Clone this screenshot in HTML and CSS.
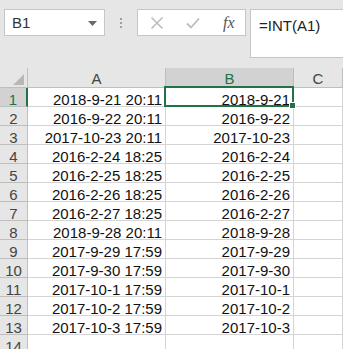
FILE: index.html
```html
<!DOCTYPE html>
<html>
<head>
    <title>INT</title>
    <link rel="stylesheet" href="styles.css">
</head>
<body>
    <div class="toolbar">
        <div class="name-box">
            <span>B1</span>
            <svg class="drop" width="9" height="5" viewBox="0 0 9 5"><path d="M0 0 H9 L4.5 5 Z" fill="#6a6a6a"/></svg>
        </div>
        <div class="grip"><i></i><i></i><i></i></div>
        <div class="buttons">
            <svg width="14" height="14" viewBox="0 0 14 14"><path d="M1.5 1.5 L12.5 12.5 M12.5 1.5 L1.5 12.5" stroke="#bdbdbd" stroke-width="1.6" fill="none"/></svg>
            <svg class="ok" width="14" height="12" viewBox="0 0 14 12"><path d="M1 6.5 L5 10.5 L13 1.5" stroke="#bdbdbd" stroke-width="1.8" fill="none"/></svg>
            <span class="fx">fx</span>
        </div>
        <div class="formula">=INT(A1)</div>
    </div>

    <div class="sheet" id="sheet">
        <div class="hd corner"><svg width="11" height="11" viewBox="0 0 11 11"><path d="M11 0 V11 H0 Z" fill="#b7b7b7"/></svg></div>
        <div class="hd col">A</div>
        <div class="hd col sel">B</div>
        <div class="hd col">C</div>
        <div class="selection"><div class="handle"></div></div>
    </div>

    <script>
        const data = [
            ['2018-9-21 20:11', '2018-9-21'],
            ['2016-9-22 20:11', '2016-9-22'],
            ['2017-10-23 20:11', '2017-10-23'],
            ['2016-2-24 18:25', '2016-2-24'],
            ['2016-2-25 18:25', '2016-2-25'],
            ['2016-2-26 18:25', '2016-2-26'],
            ['2016-2-27 18:25', '2016-2-27'],
            ['2018-9-28 20:11', '2018-9-28'],
            ['2017-9-29 17:59', '2017-9-29'],
            ['2017-9-30 17:59', '2017-9-30'],
            ['2017-10-1 17:59', '2017-10-1'],
            ['2017-10-2 17:59', '2017-10-2'],
            ['2017-10-3 17:59', '2017-10-3'],
            ['', '']
        ];
        const sheet = document.getElementById('sheet');
        data.forEach(function(row, i) {
            const num = document.createElement('div');
            num.className = 'hd row' + (i === 0 ? ' sel' : '');
            num.textContent = i + 1;
            sheet.appendChild(num);
            [row[0], row[1], ''].forEach(function(v) {
                const c = document.createElement('div');
                c.className = 'cell';
                c.textContent = v;
                sheet.appendChild(c);
            });
        });
    </script>
</body>
</html>
```

FILE: styles.css
```css
body {
    margin: 0;
    background: #fff;
    font-family: "Liberation Sans", Arial, sans-serif;
    font-size: 15px;
    color: #000;
}
.toolbar {
    background: #e6e6e6;
    height: 68px;
    display: flex;
    align-items: flex-start;
    padding: 9px 0 0 4px;
    box-sizing: border-box;
}
.name-box {
    width: 101px;
    height: 27px;
    box-sizing: border-box;
    background: #fff;
    border: 1px solid #c6c6c6;
    display: flex;
    align-items: center;
    justify-content: space-between;
    padding: 0 7px 0 7px;
    color: #333;
}
.drop {
    margin-top: 1px;
}
.grip {
    width: 32px;
    height: 27px;
    display: flex;
    flex-direction: column;
    align-items: center;
    justify-content: center;
    gap: 2px;
}
.grip i {
    width: 2px;
    height: 2px;
    background: #a0a0a0;
}
.buttons {
    width: 109px;
    height: 27px;
    box-sizing: border-box;
    background: #fff;
    border: 1px solid #c6c6c6;
    display: flex;
    align-items: center;
    padding-left: 12px;
}
.buttons .ok {
    margin-left: 22px;
}
.fx {
    font-family: "Liberation Serif", serif;
    font-style: italic;
    font-size: 16px;
    color: #555;
    margin-left: 23px;
}
.formula {
    flex: 1;
    margin-left: 4px;
    height: 49px;
    box-sizing: border-box;
    background: #fff;
    border: 1px solid #c6c6c6;
    border-right: none;
    padding: 5px 0 0 8px;
    line-height: 22px;
    color: #222;
}
.sheet {
    position: relative;
    display: grid;
    grid-template-columns: 28px 138px 128px 1fr;
    grid-auto-rows: 19px;
    grid-template-rows: 20px;
}
.hd {
    background: #e6e6e6;
    color: #444;
    text-align: center;
    box-sizing: border-box;
    border-right: 1px solid #bebebe;
    border-bottom: 1px solid #bebebe;
    overflow: hidden;
}
.col {
    line-height: 22px;
}
.row {
    line-height: 24px;
}
.corner {
    display: flex;
    align-items: flex-end;
    justify-content: flex-end;
    padding: 0 3px 2px 0;
}
.hd.sel {
    background: #d2d2d2;
    color: #217346;
}
.col.sel {
    border-bottom: 2px solid #217346;
}
.row.sel {
    border-right: 2px solid #217346;
}
.cell {
    box-sizing: border-box;
    border-right: 1px solid #d4d4d4;
    border-bottom: 1px solid #d4d4d4;
    text-align: right;
    padding-right: 3px;
    line-height: 24px;
    overflow: hidden;
    white-space: nowrap;
    color: #111;
}
.selection {
    position: absolute;
    left: 164px;
    top: 18px;
    width: 130px;
    height: 21px;
    box-sizing: border-box;
    border: 2px solid #217346;
}
.handle {
    position: absolute;
    right: -4px;
    bottom: -4px;
    width: 5px;
    height: 5px;
    background: #217346;
    border: 1px solid #fff;
}
```
